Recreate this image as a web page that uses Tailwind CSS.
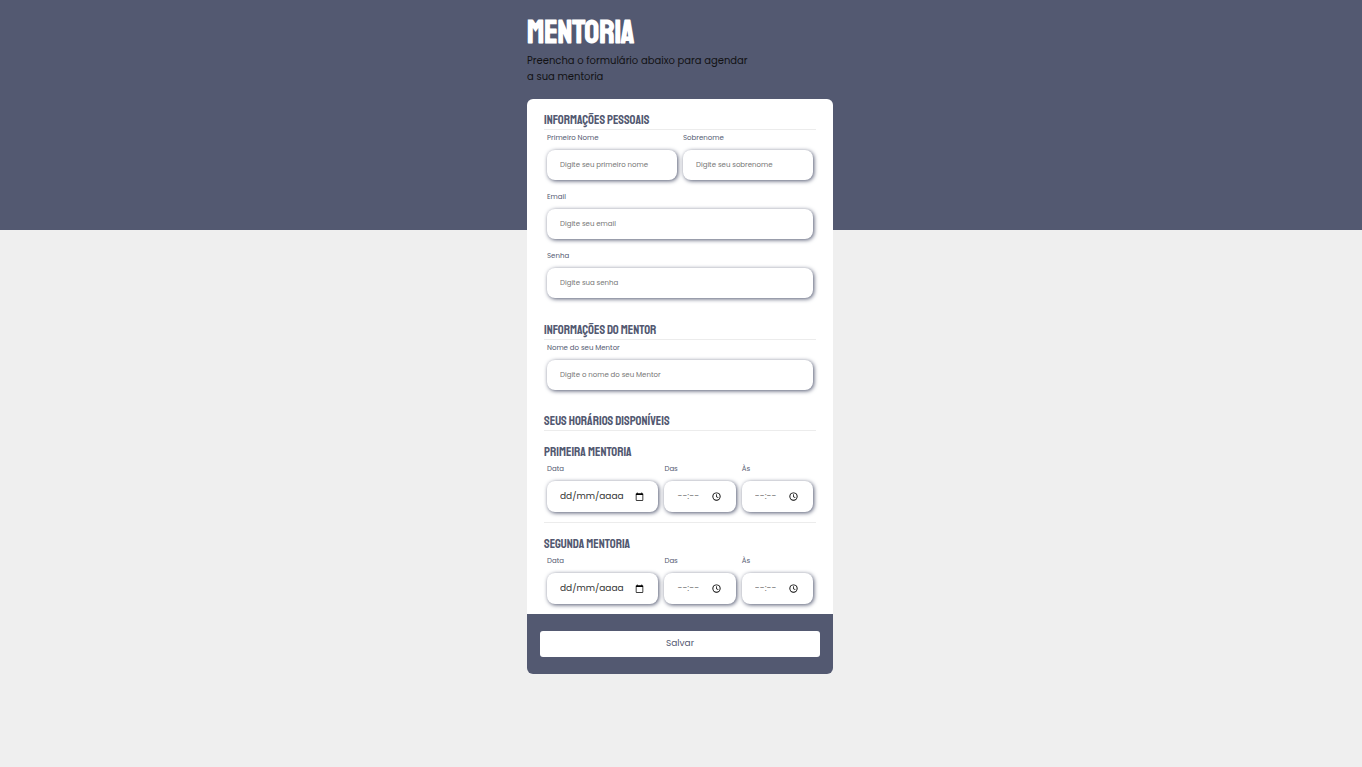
<!DOCTYPE html>
<html lang="pt-BR">
<head>
<meta charset="utf-8">
<meta name="viewport" content="width=device-width, initial-scale=1">
<title>Mentoria</title>
<script src="https://cdn.jsdelivr.net/npm/@tailwindcss/browser@4"></script>
</head>
<body class="min-h-screen bg-[#efefef] bg-[linear-gradient(#535971_230px,#efefef_230px)] bg-no-repeat pr-0.5 font-['Poppins','Inter',sans-serif] text-[7px] text-[#535971]">
<svg class="hidden">
  <symbol id="calendar" viewBox="0 0 24 24"><path d="M20 3h-1V1h-2v2H7V1H5v2H4c-1.100 0-2 .9-2 2v16c0 1.100.9 2 2 2h16c1.100 0 2-.9 2-2V5c0-1.100-.9-2-2-2zm0 18H4V8h16v13z"/></symbol>
  <symbol id="clock" viewBox="0 0 24 24"><path d="M12 1a11 11 0 1 0 0 22 11 11 0 0 0 0-22zm0 19.500a8.500 8.500 0 1 1 0-17 8.500 8.500 0 0 1 0 17zM13 6h-2v7l5.500 3.300 1-1.700L13 12z"/></symbol>
</svg>
<div class="mx-auto w-full max-w-[306px] pt-[13px]">
  <header>
    <h1 class="font-['Staatliches','Bebas_Neue','Liberation_Sans_Narrow',sans-serif] text-[32px] leading-10 font-bold text-white">MENTORIA</h1>
    <p class="max-w-[225px] text-[10px] leading-4 text-[#121214]">Preencha o formulário abaixo para agendar a sua mentoria</p>
  </header>

  <form class="mt-3.5 overflow-hidden rounded-md bg-white">
    <div class="flex flex-col gap-[23px] px-[17px] pt-[13px]">
      <section class="pb-px">
        <h2 class="h-[18px] border-b border-[#ececec] font-['Staatliches','Bebas_Neue','Liberation_Sans_Narrow',sans-serif] text-[13px] leading-[17px] font-normal">INFORMAÇÕES PESSOAIS</h2>
        <div class="grid grid-cols-2 gap-x-1.5 gap-y-[9px] px-[3px]">
          <div class="flex flex-col gap-1">
            <label for="nome" class="leading-4">Primeiro Nome</label>
            <input id="nome" type="text" placeholder="Digite seu primeiro nome" class="h-[30px] w-full rounded-lg bg-white px-[13px] shadow-[1px_1px_4px_#535971] outline-none placeholder:text-[#757575]">
          </div>
          <div class="flex flex-col gap-1">
            <label for="sobrenome" class="leading-4">Sobrenome</label>
            <input id="sobrenome" type="text" placeholder="Digite seu sobrenome" class="h-[30px] w-full rounded-lg bg-white px-[13px] shadow-[1px_1px_4px_#535971] outline-none placeholder:text-[#757575]">
          </div>
          <div class="col-span-2 flex flex-col gap-1">
            <label for="email" class="leading-4">Email</label>
            <input id="email" type="email" placeholder="Digite seu email" class="h-[30px] w-full rounded-lg bg-white px-[13px] shadow-[1px_1px_4px_#535971] outline-none placeholder:text-[#757575]">
          </div>
          <div class="col-span-2 flex flex-col gap-1">
            <label for="senha" class="leading-4">Senha</label>
            <input id="senha" type="password" placeholder="Digite sua senha" class="h-[30px] w-full rounded-lg bg-white px-[13px] shadow-[1px_1px_4px_#535971] outline-none placeholder:text-[#757575]">
          </div>
        </div>
      </section>

      <section>
        <h2 class="h-[18px] border-b border-[#ececec] font-['Staatliches','Bebas_Neue','Liberation_Sans_Narrow',sans-serif] text-[13px] leading-[17px] font-normal">INFORMAÇÕES DO MENTOR</h2>
        <div class="flex flex-col gap-1 px-[3px]">
          <label for="mentor" class="leading-4">Nome do seu Mentor</label>
          <input id="mentor" type="text" placeholder="Digite o nome do seu Mentor" class="h-[30px] w-full rounded-lg bg-white px-[13px] shadow-[1px_1px_4px_#535971] outline-none placeholder:text-[#757575]">
        </div>
      </section>

      <section>
        <h2 class="h-[18px] border-b border-[#ececec] font-['Staatliches','Bebas_Neue','Liberation_Sans_Narrow',sans-serif] text-[13px] leading-[17px] font-normal">SEUS HORÁRIOS DISPONÍVEIS</h2>
        <div class="border-b border-[#ececec] pt-[13px] pb-2.5">
          <h3 class="font-['Staatliches','Bebas_Neue','Liberation_Sans_Narrow',sans-serif] text-[13px] leading-[17px] font-normal">PRIMEIRA MENTORIA</h3>
          <div class="grid grid-cols-[111fr_71fr_71fr] gap-x-1.5 px-[3px]">
            <div class="flex flex-col gap-1">
              <label for="data1" class="leading-4">Data</label>
              <div class="flex h-[31px] items-center rounded-lg bg-white pr-3.5 pl-[13px] shadow-[1px_1px_4px_#535971]">
                <input id="data1" type="text" placeholder="dd/mm/aaaa" class="w-full min-w-0 text-[9px] outline-none placeholder:text-[#333]">
                <button type="button" aria-label="Abrir calendário"><svg class="size-[9px] fill-black"><use href="#calendar"/></svg></button>
              </div>
            </div>
            <div class="flex flex-col gap-1">
              <label for="das1" class="leading-4">Das</label>
              <div class="flex h-[31px] items-center rounded-lg bg-white pr-[15px] pl-[13px] shadow-[1px_1px_4px_#535971]">
                <input id="das1" type="text" placeholder="--:--" class="w-full min-w-0 text-[9px] outline-none placeholder:text-[#757575]">
                <button type="button" aria-label="Escolher horário"><svg class="size-[9px] fill-black"><use href="#clock"/></svg></button>
              </div>
            </div>
            <div class="flex flex-col gap-1">
              <label for="as1" class="leading-4">Às</label>
              <div class="flex h-[31px] items-center rounded-lg bg-white pr-[15px] pl-[13px] shadow-[1px_1px_4px_#535971]">
                <input id="as1" type="text" placeholder="--:--" class="w-full min-w-0 text-[9px] outline-none placeholder:text-[#757575]">
                <button type="button" aria-label="Escolher horário"><svg class="size-[9px] fill-black"><use href="#clock"/></svg></button>
              </div>
            </div>
          </div>
        </div>
        <div class="pt-[13px] pb-2.5">
          <h3 class="font-['Staatliches','Bebas_Neue','Liberation_Sans_Narrow',sans-serif] text-[13px] leading-[17px] font-normal">SEGUNDA MENTORIA</h3>
          <div class="grid grid-cols-[111fr_71fr_71fr] gap-x-1.5 px-[3px]">
            <div class="flex flex-col gap-1">
              <label for="data2" class="leading-4">Data</label>
              <div class="flex h-[31px] items-center rounded-lg bg-white pr-3.5 pl-[13px] shadow-[1px_1px_4px_#535971]">
                <input id="data2" type="text" placeholder="dd/mm/aaaa" class="w-full min-w-0 text-[9px] outline-none placeholder:text-[#333]">
                <button type="button" aria-label="Abrir calendário"><svg class="size-[9px] fill-black"><use href="#calendar"/></svg></button>
              </div>
            </div>
            <div class="flex flex-col gap-1">
              <label for="das2" class="leading-4">Das</label>
              <div class="flex h-[31px] items-center rounded-lg bg-white pr-[15px] pl-[13px] shadow-[1px_1px_4px_#535971]">
                <input id="das2" type="text" placeholder="--:--" class="w-full min-w-0 text-[9px] outline-none placeholder:text-[#757575]">
                <button type="button" aria-label="Escolher horário"><svg class="size-[9px] fill-black"><use href="#clock"/></svg></button>
              </div>
            </div>
            <div class="flex flex-col gap-1">
              <label for="as2" class="leading-4">Às</label>
              <div class="flex h-[31px] items-center rounded-lg bg-white pr-[15px] pl-[13px] shadow-[1px_1px_4px_#535971]">
                <input id="as2" type="text" placeholder="--:--" class="w-full min-w-0 text-[9px] outline-none placeholder:text-[#757575]">
                <button type="button" aria-label="Escolher horário"><svg class="size-[9px] fill-black"><use href="#clock"/></svg></button>
              </div>
            </div>
          </div>
        </div>
      </section>
    </div>
    <footer class="bg-[#535971] px-[13px] py-[17px]">
      <button type="submit" class="block h-[26px] w-full rounded-[3px] bg-white text-[9px]">Salvar</button>
    </footer>
  </form>
</div>
</body>
</html>
